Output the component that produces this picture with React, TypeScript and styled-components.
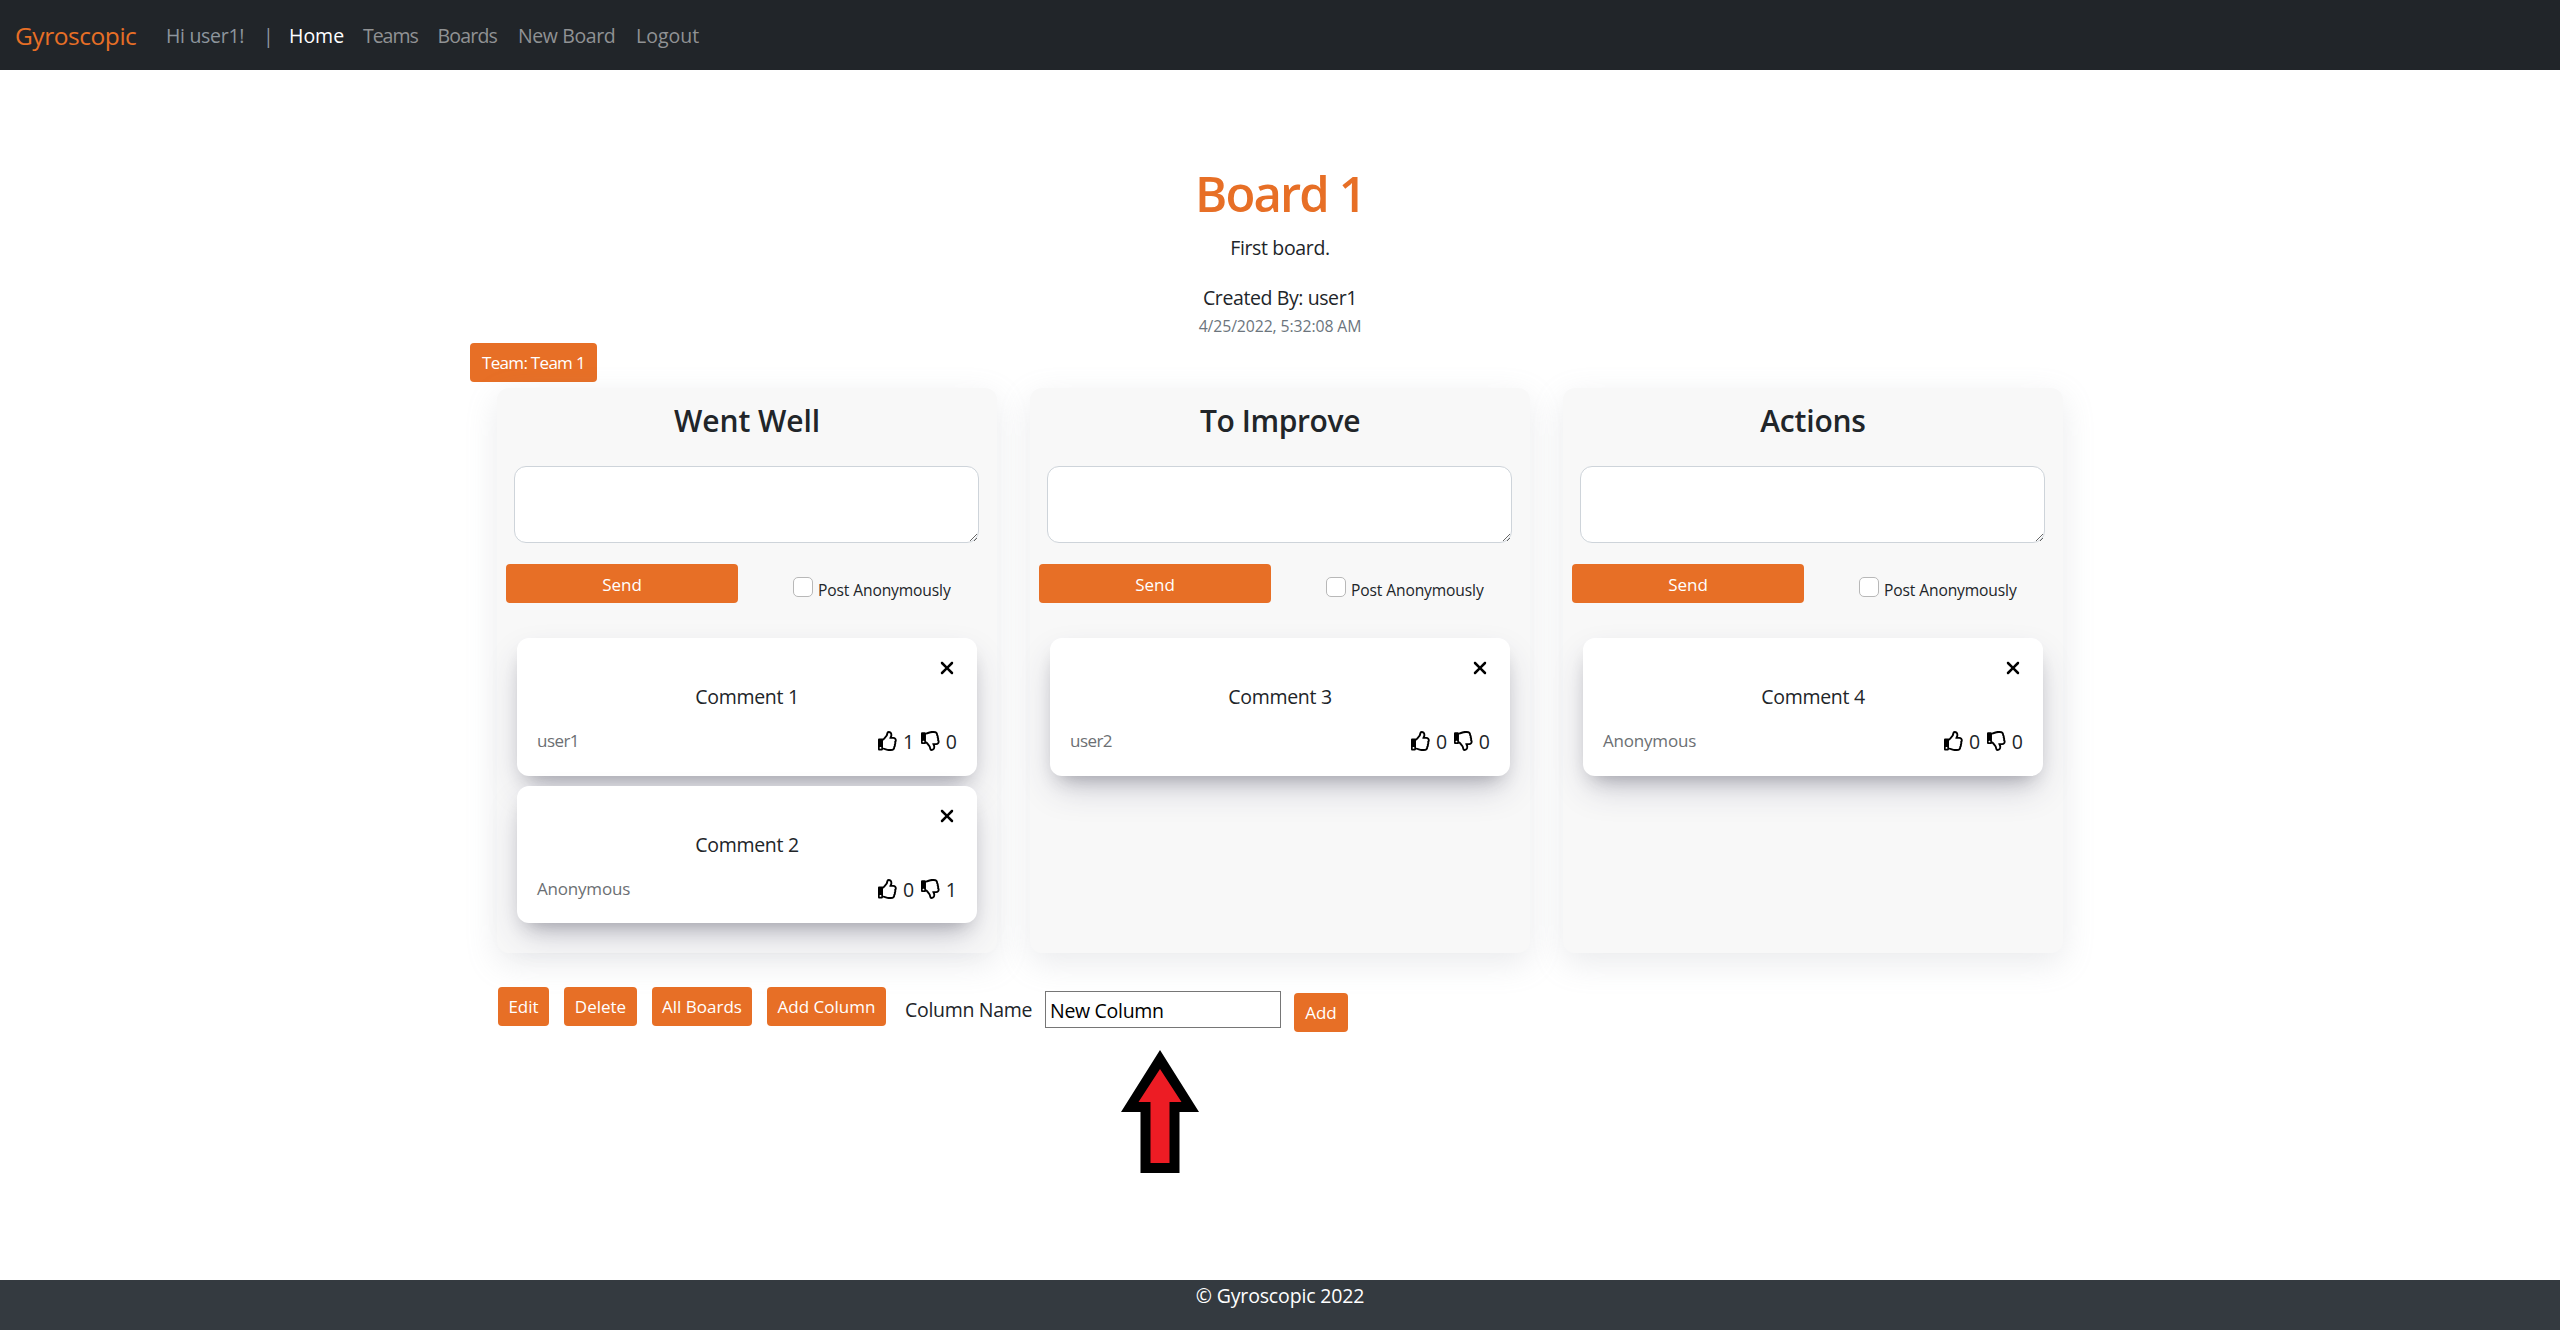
import React from "react";
import styled, { createGlobalStyle } from "styled-components";
import { FaRegThumbsUp, FaRegThumbsDown } from "react-icons/fa";
import { FaXmark } from "react-icons/fa6";

const orange = "#e76f26";
const ink = "#212529";

const GlobalStyle = createGlobalStyle`
  * { box-sizing: border-box; }
  body {
    margin: 0;
    background: #fff;
    color: ${ink};
    font: 400 19.5px/30px "Open Sans", "Noto Sans", sans-serif;
  }
  h1, h2, p { margin: 0; }
  textarea, input, button { font-family: inherit; }
`;

const Page = styled.div`
  min-height: 1330px;
  display: flex;
  flex-direction: column;
`;

const Navbar = styled.nav`
  height: 70px;
  display: flex;
  align-items: center;
  padding: 2px 0 0 15px;
  background: #212529;
`;

const Brand = styled.a`
  width: 151px;
  color: ${orange};
  font-size: 24.5px;
  letter-spacing: -0.45px;
`;

const NavItem = styled.a<{ $w: number; $ls?: number; $active?: boolean; $user?: boolean }>`
  width: ${(p) => p.$w}px;
  white-space: nowrap;
  letter-spacing: ${(p) => p.$ls ?? 0}px;
  color: ${(p) => (p.$active ? "#fff" : p.$user ? "#8d959d" : "#909294")};
`;

const Main = styled.main`
  flex: 1;
  width: 1620px;
  margin: 0 auto;
  display: flex;
  flex-direction: column;
`;

const BoardHeader = styled.header`
  padding-top: 93px;
  height: 273px;
  text-align: center;
`;

const BoardTitle = styled.h1`
  color: ${orange};
  font-size: 49px;
  line-height: 60px;
  font-weight: 600;
  letter-spacing: -1.85px;
`;

const Description = styled.p`
  margin-top: 10px;
  letter-spacing: -0.35px;
`;

const Creator = styled.p`
  margin-top: 20px;
  letter-spacing: -0.4px;
`;

const Timestamp = styled.p`
  margin-top: 1px;
  font-size: 15.8px;
  line-height: 24px;
  letter-spacing: -0.1px;
  color: #6c757d;
`;

const Button = styled.button<{ $w: number; $ls?: number; $drop?: number }>`
  flex: none;
  width: ${(p) => p.$w}px;
  height: 39px;
  padding: ${(p) => p.$drop ?? 0}px 0 0;
  border: 0;
  border-radius: 4px;
  background: ${orange};
  color: #fff;
  font-size: 17px;
  line-height: 26px;
  letter-spacing: ${(p) => p.$ls ?? 0}px;
  white-space: nowrap;
`;

const Columns = styled.section`
  display: flex;
  gap: 33px;
  margin: 6px 0 0 27px;
`;

const ColumnCard = styled.article`
  width: 500px;
  height: 565px;
  padding-top: 15px;
  border-radius: 12px;
  background: #f8f8f8;
  box-shadow: rgba(149, 157, 165, 0.2) 0 10px 32px;
`;

const ColumnTitle = styled.h2<{ $ls: number }>`
  text-align: center;
  font-size: 30px;
  line-height: 36px;
  font-weight: 600;
  letter-spacing: ${(p) => p.$ls}px;
`;

const Draft = styled.textarea`
  display: block;
  width: 465px;
  height: 77px;
  margin: 27px 0 0 17.4px;
  padding: 8px 15px;
  border: 1px solid #ced4da;
  border-radius: 12px;
  background: #fff;
  resize: vertical;
`;

const SendRow = styled.div`
  display: flex;
  margin: 21px 0 0 9px;
`;

const AnonymousLabel = styled.label`
  display: flex;
  margin: 13px 0 0 55px;
  font-size: 15.6px;
  line-height: 24px;
  letter-spacing: -0.12px;
`;

const Checkbox = styled.input.attrs({ type: "checkbox" })`
  appearance: none;
  width: 20px;
  height: 20px;
  margin: 0 5px 0 0;
  border: 1px solid #b8b8b8;
  border-radius: 5px;
  background: #fff;
`;

const AnonymousText = styled.span`
  padding-top: 1px;
`;

const Comments = styled.div`
  display: flex;
  flex-direction: column;
  gap: 10px;
  margin: 35px 0 0 20px;
`;

const CommentCard = styled.div`
  width: 460px;
  height: 137.5px;
  padding: 20px 20px 0;
  border-radius: 12px;
  background: #fff;
  box-shadow:
    rgba(50, 50, 93, 0.25) 0 16px 34px -6px,
    rgba(0, 0, 0, 0.3) 0 10px 20px -10px;
`;

const CloseRow = styled.div`
  display: flex;
  justify-content: flex-end;
  height: 20px;
  color: #000;
  font-size: 20px;
`;

const CommentText = styled.p`
  margin-top: 4px;
  text-align: center;
  letter-spacing: -0.3px;
`;

const CommentFooter = styled.div`
  display: flex;
  justify-content: space-between;
  margin-top: 14px;
`;

const Author = styled.span<{ $ls: number }>`
  font-size: 17px;
  color: #6c6f73;
  letter-spacing: ${(p) => p.$ls}px;
`;

const Votes = styled.div`
  display: flex;
  padding-top: 1px;
`;

const Vote = styled.span`
  display: flex;
  width: 43px;

  &:last-child {
    width: 36px;
  }

  svg {
    margin: 4px 5px 0 0;
    font-size: 20px;
    color: #000;
  }
`;

const Actions = styled.div`
  display: flex;
  align-items: flex-start;
  gap: 15px;
  margin: 34px 0 0 28px;
`;

const AddForm = styled.form`
  display: flex;
  padding-left: 4px;
`;

const FieldLabel = styled.label`
  width: 140px;
  margin-top: 8px;
  white-space: nowrap;
  letter-spacing: -0.3px;
`;

const NameInput = styled.input`
  width: 236px;
  height: 37px;
  margin: 4px 13px 0 0;
  padding: 2px 4px 1px;
  border: 1px solid #767676;
  color: #000;
  font-size: 19.5px;
  letter-spacing: -0.3px;
`;

const AddSlot = styled.div`
  padding-top: 6px;
`;

const Pointer = styled.svg`
  display: block;
  margin: 18px 0 0 650px;
`;

const Footer = styled.footer`
  height: 50px;
  padding-top: 1px;
  background: #343a40;
  color: #fff;
  text-align: center;
  letter-spacing: -0.15px;
`;

interface Comment {
  text: string;
  author: string;
  up: number;
  down: number;
}

interface Column {
  title: string;
  spacing: number;
  comments: Comment[];
}

const columns: Column[] = [
  {
    title: "Went Well",
    spacing: -0.1,
    comments: [
      { text: "Comment 1", author: "user1", up: 1, down: 0 },
      { text: "Comment 2", author: "Anonymous", up: 0, down: 1 },
    ],
  },
  {
    title: "To Improve",
    spacing: -0.4,
    comments: [{ text: "Comment 3", author: "user2", up: 0, down: 0 }],
  },
  {
    title: "Actions",
    spacing: -0.2,
    comments: [{ text: "Comment 4", author: "Anonymous", up: 0, down: 0 }],
  },
];

function CommentItem({ comment }: { comment: Comment }) {
  return (
    <CommentCard>
      <CloseRow>
        <FaXmark />
      </CloseRow>
      <CommentText>{comment.text}</CommentText>
      <CommentFooter>
        <Author $ls={comment.author === "Anonymous" ? -0.2 : -0.55}>{comment.author}</Author>
        <Votes>
          <Vote>
            <FaRegThumbsUp />
            {comment.up}
          </Vote>
          <Vote>
            <FaRegThumbsDown />
            {comment.down}
          </Vote>
        </Votes>
      </CommentFooter>
    </CommentCard>
  );
}

function BoardColumn({ column }: { column: Column }) {
  return (
    <ColumnCard>
      <ColumnTitle $ls={column.spacing}>{column.title}</ColumnTitle>
      <Draft />
      <SendRow>
        <Button $w={232} $drop={2}>Send</Button>
        <AnonymousLabel>
          <Checkbox />
          <AnonymousText>Post Anonymously</AnonymousText>
        </AnonymousLabel>
      </SendRow>
      <Comments>
        {column.comments.map((c) => (
          <CommentItem key={c.text} comment={c} />
        ))}
      </Comments>
    </ColumnCard>
  );
}

export default function App() {
  return (
    <Page>
      <GlobalStyle />
      <Navbar>
        <Brand>Gyroscopic</Brand>
        <NavItem $w={97} $ls={-0.3} $user>Hi user1!</NavItem>
        <NavItem $w={26} $user>|</NavItem>
        <NavItem $w={74} $active>Home</NavItem>
        <NavItem $w={74.5} $ls={-1.05}>Teams</NavItem>
        <NavItem $w={80.5} $ls={-0.8}>Boards</NavItem>
        <NavItem $w={118} $ls={-0.4}>New Board</NavItem>
        <NavItem $w={64}>Logout</NavItem>
      </Navbar>
      <Main>
        <BoardHeader>
          <BoardTitle>Board 1</BoardTitle>
          <Description>First board.</Description>
          <Creator>Created By: user1</Creator>
          <Timestamp>4/25/2022, 5:32:08 AM</Timestamp>
        </BoardHeader>
        <Button $w={127} $ls={-0.7}>Team: Team 1</Button>
        <Columns>
          {columns.map((c) => (
            <BoardColumn key={c.title} column={c} />
          ))}
        </Columns>
        <Actions>
          <Button $w={51}>Edit</Button>
          <Button $w={73}>Delete</Button>
          <Button $w={100}>All Boards</Button>
          <Button $w={119}>Add Column</Button>
          <AddForm>
            <FieldLabel>Column Name</FieldLabel>
            <NameInput defaultValue="New Column" />
            <AddSlot>
              <Button $w={54} type="button">Add</Button>
            </AddSlot>
          </AddForm>
        </Actions>
        <Pointer width="80" height="123" viewBox="0 0 80 123">
          <path d="M40 0 79 62H59.5V123H20.5V62H1Z" fill="#000" />
          <path d="M40 19 61.5 52H49.5V113H30.5V52H18.5Z" fill="#ed1c24" />
        </Pointer>
      </Main>
      <Footer>© Gyroscopic 2022</Footer>
    </Page>
  );
}
